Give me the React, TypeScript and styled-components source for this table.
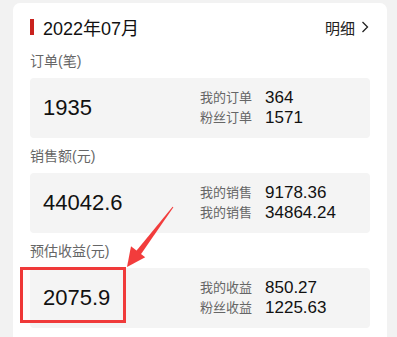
import React from "react"
import styled, { createGlobalStyle } from "styled-components"

const GlobalStyle = createGlobalStyle`
  html, body {
    margin: 0;
    padding: 0;
    background: #f2f2f2;
    font-family: "Liberation Sans", "Noto Sans CJK SC", sans-serif;
  }
`

const Page = styled.div`
  position: relative;
  width: 397px;
  height: 337px;
  overflow: hidden;
`

const Card = styled.div`
  margin: 3px 10px 0 13px;
  padding: 12px 17px 20px 17px;
  background: #fff;
  border-radius: 7px;
`

const Header = styled.div`
  display: flex;
  align-items: center;
  justify-content: space-between;
  height: 24px;
  margin-bottom: 12px;
`

const Title = styled.div`
  display: flex;
  align-items: center;
  font-size: 18px;
  color: #111;
`

const Mark = styled.span`
  width: 4px;
  height: 16px;
  margin-right: 9px;
  background: #c9221e;
`

const Detail = styled.div`
  display: flex;
  align-items: center;
  gap: 6px;
  margin-right: 1px;
  font-size: 15px;
  color: #222;
`

const SectionLabel = styled.div`
  height: 20px;
  line-height: 20px;
  margin-bottom: 7px;
  font-size: 14px;
  color: #666;
`

const StatBox = styled.div`
  position: relative;
  display: grid;
  grid-template-columns: 170px 1fr;
  align-items: center;
  height: 60px;
  margin-bottom: 8px;
  background: #f4f4f4;
  border-radius: 4px;
`

const Total = styled.div`
  padding-left: 13px;
  font-size: 22px;
  color: #111;
`

const Breakdown = styled.div`
  display: grid;
  grid-template-columns: auto auto;
  justify-content: start;
  column-gap: 13px;
  line-height: 20px;
`

const SubLabel = styled.span`
  font-size: 13px;
  color: #666;
`

const SubValue = styled.span`
  font-size: 17px;
  color: #111;
`

const Highlight = styled.div`
  position: absolute;
  left: -10px;
  top: -1px;
  width: 100px;
  height: 50px;
  border: 3px solid #f03a3a;
`

const Overlay = styled.svg`
  position: absolute;
  left: 0;
  top: 0;
  pointer-events: none;
`

type Row = { label: string; value: string }

interface StatProps {
  title: string
  total: string
  rows: Row[]
  marked?: boolean
}

const Stat: React.FC<StatProps> = ({ title, total, rows, marked }) => (
  <>
    <SectionLabel>{title}</SectionLabel>
    <StatBox>
      {marked && <Highlight />}
      <Total>{total}</Total>
      <Breakdown>
        {rows.map((r, i) => (
          <React.Fragment key={i}>
            <SubLabel>{r.label}</SubLabel>
            <SubValue>{r.value}</SubValue>
          </React.Fragment>
        ))}
      </Breakdown>
    </StatBox>
  </>
)

const Chevron = () => (
  <svg width="8" height="12" viewBox="0 0 8 12">
    <path d="M1.5 1 L6.5 6 L1.5 11" fill="none" stroke="#222" strokeWidth="1.3" />
  </svg>
)

const Arrow = () => (
  <Overlay width="397" height="337" viewBox="0 0 397 337">
    <polygon points="173.4,207.3 172.6,206.7 135.8,251.5 140.4,255.1" fill="#f23c3c" />
    <polygon points="127,267 131,246.3 145.2,257.3" fill="#f23c3c" />
  </Overlay>
)

export default function App() {
  return (
    <Page>
      <GlobalStyle />
      <Card>
        <Header>
          <Title>
            <Mark />
            2022年07月
          </Title>
          <Detail>
            明细
            <Chevron />
          </Detail>
        </Header>
        <Stat
          title="订单(笔)"
          total="1935"
          rows={[
            { label: "我的订单", value: "364" },
            { label: "粉丝订单", value: "1571" },
          ]}
        />
        <Stat
          title="销售额(元)"
          total="44042.6"
          rows={[
            { label: "我的销售", value: "9178.36" },
            { label: "我的销售", value: "34864.24" },
          ]}
        />
        <Stat
          title="预估收益(元)"
          total="2075.9"
          marked
          rows={[
            { label: "我的收益", value: "850.27" },
            { label: "粉丝收益", value: "1225.63" },
          ]}
        />
      </Card>
      <Arrow />
    </Page>
  )
}
